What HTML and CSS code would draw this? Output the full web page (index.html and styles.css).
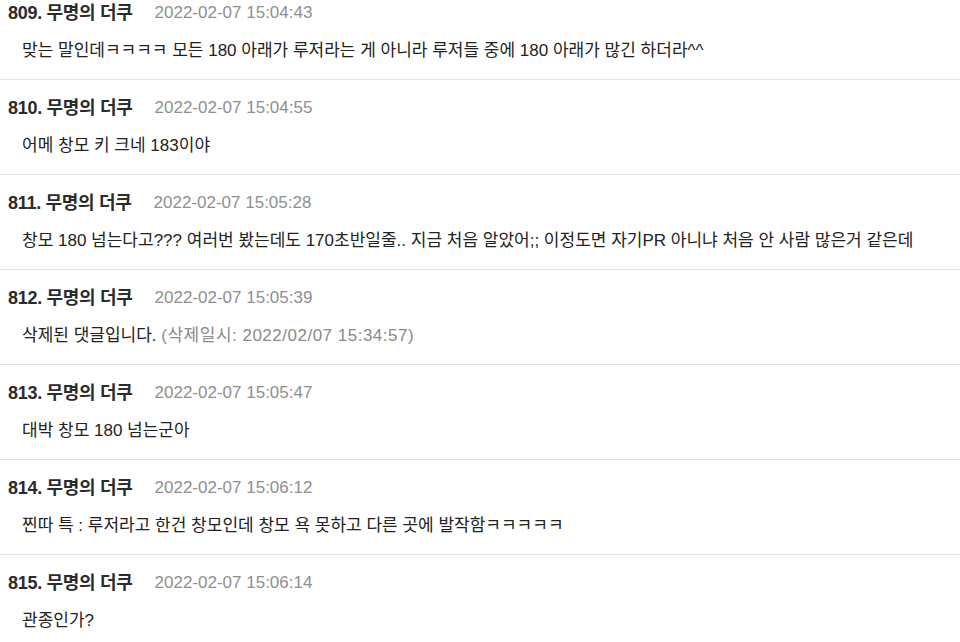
FILE: index.html
```html
<!DOCTYPE html>
<html lang="ko">
<head>
<meta charset="utf-8">
<link rel="stylesheet" href="styles.css">
</head>
<body>
<ul class="comments">
  <li class="comment first">
    <div class="head"><span class="name">809. 무명의 더쿠</span><span class="date">2022-02-07 15:04:43</span></div>
    <div class="body">맞는 말인데ㅋㅋㅋㅋ 모든 180 아래가 루저라는 게 아니라 루저들 중에 180 아래가 많긴 하더라^^</div>
  </li>
  <li class="comment">
    <div class="head"><span class="name">810. 무명의 더쿠</span><span class="date">2022-02-07 15:04:55</span></div>
    <div class="body">어메 창모 키 크네 183이야</div>
  </li>
  <li class="comment">
    <div class="head"><span class="name">811. 무명의 더쿠</span><span class="date">2022-02-07 15:05:28</span></div>
    <div class="body">창모 180 넘는다고??? 여러번 봤는데도 170초반일줄.. 지금 처음 알았어;; 이정도면 자기PR 아니냐 처음 안 사람 많은거 같은데</div>
  </li>
  <li class="comment">
    <div class="head"><span class="name">812. 무명의 더쿠</span><span class="date">2022-02-07 15:05:39</span></div>
    <div class="body">삭제된 댓글입니다. <span class="deleted">(삭제일시: 2022/02/07 15:34:57)</span></div>
  </li>
  <li class="comment">
    <div class="head"><span class="name">813. 무명의 더쿠</span><span class="date">2022-02-07 15:05:47</span></div>
    <div class="body">대박 창모 180 넘는군아</div>
  </li>
  <li class="comment">
    <div class="head"><span class="name">814. 무명의 더쿠</span><span class="date">2022-02-07 15:06:12</span></div>
    <div class="body">찐따 특 : 루저라고 한건 창모인데 창모 욕 못하고 다른 곳에 발작함ㅋㅋㅋㅋㅋ</div>
  </li>
  <li class="comment">
    <div class="head"><span class="name">815. 무명의 더쿠</span><span class="date">2022-02-07 15:06:14</span></div>
    <div class="body">관종인가?</div>
  </li>
</ul>
</body>
</html>
```
FILE: styles.css
```css
html, body {
  margin: 0;
  padding: 0;
  background: #fff;
}
body {
  font-family: "Liberation Sans", "Noto Sans CJK KR", sans-serif;
  color: #222;
  width: 960px;
  height: 642px;
  overflow: hidden;
}
.comments {
  list-style: none;
  margin: 0;
  padding: 0;
}
.comment {
  padding: 18px 8px 18px 8px;
  border-bottom: 1px solid #e4e4e4;
}
.comment.first {
  padding-top: 3px;
}
.head {
  display: flex;
  align-items: center;
  height: 20px;
  line-height: 20px;
}
.name {
  font-size: 18px;
  font-weight: bold;
  color: #2b2b2b;
  letter-spacing: -0.3px;
}
.date {
  margin-left: 22px;
  font-size: 17px;
  color: #8f8f8f;
}
.body {
  margin-top: 18px;
  padding-left: 14px;
  height: 20px;
  line-height: 20px;
  font-size: 17px;
  white-space: nowrap;
}
.deleted {
  color: #8a8a8a;
  letter-spacing: 0.5px;
}
```
